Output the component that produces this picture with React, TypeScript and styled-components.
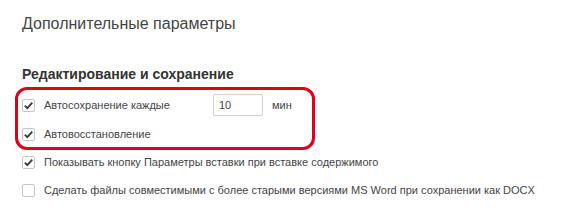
import { createGlobalStyle } from "styled-components";
import styled from "styled-components";

const GlobalStyle = createGlobalStyle`
  body {
    margin: 0;
    background: #ffffff;
    font-family: Arial, "Liberation Sans", sans-serif;
    color: #444444;
  }
`;

type CheckProps = {
  checked: boolean;
};

function CheckBox({ checked }: CheckProps) {
  return (
    <Box>
      {checked && (
        <svg width="11" height="11" viewBox="0 0 11 11">
          <path
            d="M1.8 5.6 L4.3 8.1 L9.3 2.6"
            fill="none"
            stroke="#3a3a3a"
            strokeWidth="1.9"
          />
        </svg>
      )}
    </Box>
  );
}

export default function App() {
  return (
    <Page>
      <GlobalStyle />
      <Title>Дополнительные параметры</Title>
      <Heading>Редактирование и сохранение</Heading>
      <Highlight>
        <Row>
          <CheckBox checked />
          <Label $width={169}>Автосохранение каждые</Label>
          <MinutesInput defaultValue="10" />
          <Unit>мин</Unit>
        </Row>
        <Row $gap={7}>
          <CheckBox checked />
          <Label>Автовосстановление</Label>
        </Row>
      </Highlight>
      <Row $gap={1}>
        <CheckBox checked />
        <Label>Показывать кнопку Параметры вставки при вставке содержимого</Label>
      </Row>
      <Row $gap={6}>
        <CheckBox checked={false} />
        <Label>
          Сделать файлы совместимыми с более старыми версиями MS Word при
          сохранении как DOCX
        </Label>
      </Row>
    </Page>
  );
}

const Page = styled.div`
  padding: 14px 0 0 22px;
  width: 577px;
  height: 222px;
  box-sizing: border-box;
`;

const Title = styled.div`
  font-size: 16px;
  line-height: 20px;
  color: #444444;
`;

const Heading = styled.div`
  margin-top: 32px;
  font-size: 14px;
  line-height: 16px;
  font-weight: bold;
  color: #333333;
`;

const Highlight = styled.div`
  margin: 5px 0 0 -7px;
  width: 300px;
  height: 63px;
  box-sizing: border-box;
  border: 3px solid #e0001b;
  border-radius: 12px;
  padding: 4px 0 0 4px;
`;

const Row = styled.div<{ $gap?: number }>`
  display: flex;
  align-items: center;
  height: 22px;
  margin-top: ${(p) => p.$gap ?? 0}px;
`;

const Box = styled.div`
  width: 13px;
  height: 13px;
  box-sizing: border-box;
  border: 1px solid #c6c6c6;
  border-radius: 2px;
  background: #ffffff;
  display: flex;
  align-items: center;
  justify-content: center;
  flex-shrink: 0;
`;

const Label = styled.span<{ $width?: number }>`
  margin-left: 9px;
  font-size: 11px;
  color: #444444;
  white-space: nowrap;
  ${(p) => (p.$width ? `width: ${p.$width}px;` : "")}
`;

const MinutesInput = styled.input`
  width: 50px;
  height: 22px;
  box-sizing: border-box;
  border: 1px solid #cfcfcf;
  border-radius: 2px;
  padding: 0 5px;
  font-family: Arial, "Liberation Sans", sans-serif;
  font-size: 11px;
  color: #444444;
  outline: none;
`;

const Unit = styled.span`
  margin-left: 9px;
  font-size: 11px;
  color: #444444;
`;
